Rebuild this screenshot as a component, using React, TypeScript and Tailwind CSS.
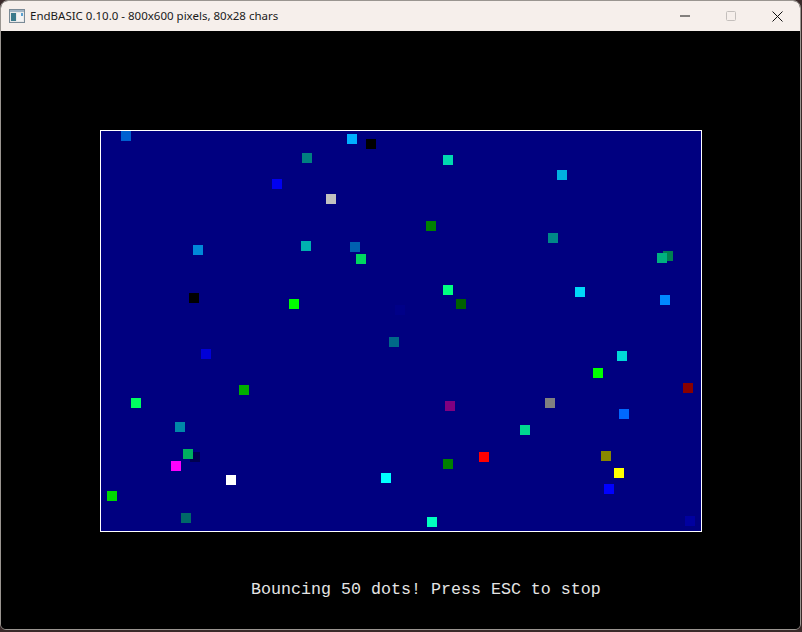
const dots: [number, number, string][] = [
  [121, 131, "#0060d0"],
  [347, 134, "#00b0ff"],
  [366, 139, "#000000"],
  [302, 153, "#008080"],
  [443, 155, "#00d8b0"],
  [557, 170, "#00b0e0"],
  [272, 179, "#0000f0"],
  [326, 194, "#c0c0c0"],
  [426, 221, "#008000"],
  [548, 233, "#008888"],
  [301, 241, "#00b0b0"],
  [350, 242, "#0060b0"],
  [193, 245, "#0088d8"],
  [663, 251, "#008050"],
  [657, 253, "#00b080"],
  [356, 254, "#00d860"],
  [443, 285, "#00ff80"],
  [575, 287, "#00d8f8"],
  [189, 293, "#000000"],
  [660, 295, "#0088ff"],
  [289, 299, "#00ff00"],
  [456, 299, "#006000"],
  [395, 305, "#000088"],
  [389, 337, "#006888"],
  [201, 349, "#0000d8"],
  [617, 351, "#00d8d8"],
  [593, 368, "#00ff00"],
  [683, 383, "#880000"],
  [239, 385, "#00b000"],
  [131, 398, "#00ff60"],
  [545, 398, "#808080"],
  [445, 401, "#800080"],
  [619, 409, "#0068ff"],
  [175, 422, "#0088a8"],
  [520, 425, "#00d890"],
  [190, 452, "#000050"],
  [183, 449, "#00b060"],
  [601, 451, "#888800"],
  [479, 452, "#ff0000"],
  [443, 459, "#008000"],
  [171, 461, "#ff00ff"],
  [614, 468, "#ffff00"],
  [381, 473, "#00ffff"],
  [226, 475, "#ffffff"],
  [604, 484, "#0000ff"],
  [107, 491, "#00d800"],
  [181, 513, "#006868"],
  [685, 516, "#0000a0"],
  [427, 517, "#00ffc0"],
];

function AppIcon() {
  return (
    <svg width="16" height="14" viewBox="0 0 16 14">
      <rect x="0.5" y="0.5" width="15" height="13" fill="#e8e8e8" stroke="#7a8a96" />
      <rect x="1" y="1" width="14" height="2" fill="#9fb4c4" />
      <rect x="2" y="4" width="5" height="8" fill="#3a7a8c" />
      <rect x="8" y="4" width="6" height="8" fill="#f4f4f4" />
      <rect x="12" y="4" width="2" height="3" fill="#5aa0d0" />
    </svg>
  );
}

export default function App() {
  return (
    <div className="w-[802px] h-[632px] bg-[#3a2a2a] overflow-hidden">
      <div className="w-[801px] h-[630px] flex flex-col rounded-t-[8px] rounded-b-[6px] overflow-hidden border border-[#9a9590] bg-black">
        {/* title bar */}
        <div className="h-[30px] shrink-0 flex items-center bg-[#f6efeb] text-[11.5px] text-[#1a1a1a]" style={{ fontFamily: '"Noto Sans", "Open Sans", sans-serif' }}>
          <div className="ml-[8px] mr-[5px] flex items-center">
            <AppIcon />
          </div>
          <span>EndBASIC 0.10.0 - 800x600 pixels, 80x28 chars</span>
          <div className="ml-auto flex h-full">
            <div className="w-[46px] flex items-center justify-center">
              <svg width="10" height="10" viewBox="0 0 10 10">
                <line x1="0" y1="5" x2="10" y2="5" stroke="#111" strokeWidth="1" />
              </svg>
            </div>
            <div className="w-[46px] flex items-center justify-center">
              <svg width="10" height="10" viewBox="0 0 10 10">
                <rect x="0.5" y="0.5" width="9" height="9" rx="1" fill="none" stroke="#c4bfbc" strokeWidth="1" />
              </svg>
            </div>
            <div className="w-[46px] flex items-center justify-center">
              <svg width="11" height="11" viewBox="0 0 11 11">
                <path d="M0.5 0.5 L10.5 10.5 M10.5 0.5 L0.5 10.5" stroke="#111" strokeWidth="1" />
              </svg>
            </div>
          </div>
        </div>

        {/* client area */}
        <div className="flex-1 bg-black flex flex-col">
          <div className="relative ml-[99px] mt-[99px] w-[602px] h-[402px] border border-white bg-[#000080]">
            {dots.map(([x, y, c], i) => (
              <div
                key={i}
                className="absolute w-[10px] h-[10px]"
                style={{ left: x - 101, top: y - 131, backgroundColor: c }}
              />
            ))}
          </div>
          <div
            className="mt-[47px] ml-[250px] text-[16.67px] leading-[21px] text-[#e4e4e4] whitespace-pre"
            style={{ fontFamily: '"Liberation Mono", "DejaVu Sans Mono", monospace' }}
          >
            Bouncing 50 dots! Press ESC to stop
          </div>
        </div>
      </div>
    </div>
  );
}
